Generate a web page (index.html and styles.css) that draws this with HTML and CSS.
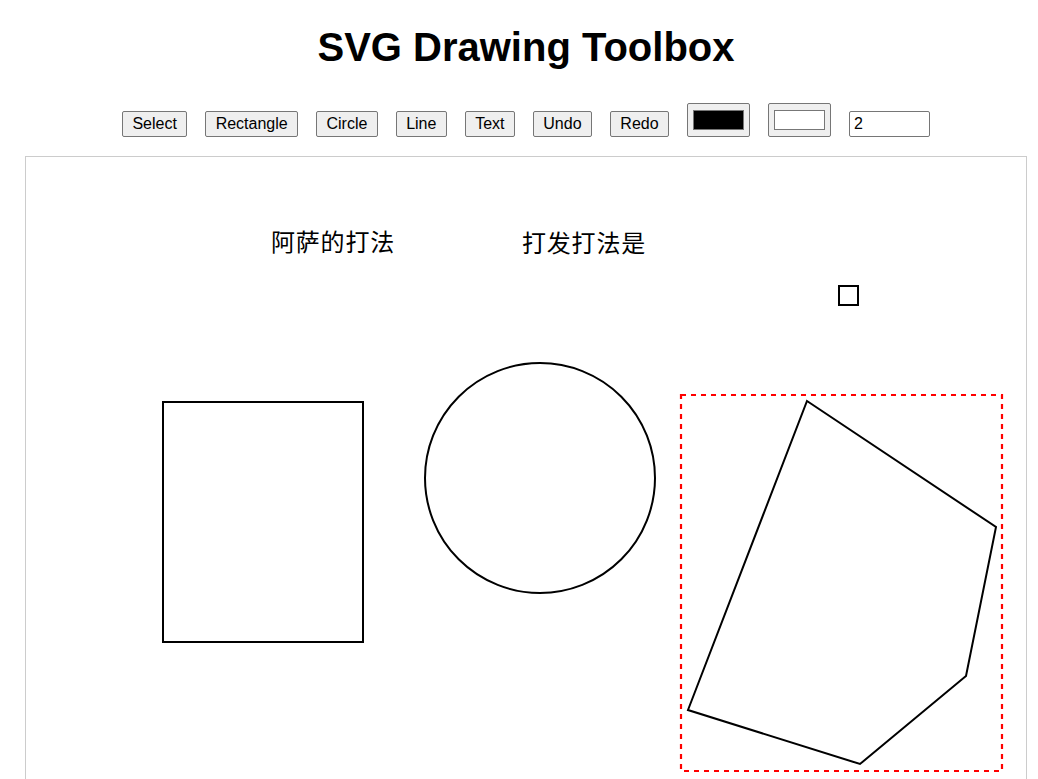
FILE: index.html
```html
<!DOCTYPE html>
<html lang="en">
<head>
    <meta charset="UTF-8">
    <meta name="viewport" content="width=device-width, initial-scale=1.0">
    <title>SVG Drawing Toolbox</title>
    <link rel="stylesheet" href="styles.css">
</head>
<body>
    <div class="app">
        <h1>SVG Drawing Toolbox</h1>

        <div class="toolbar">
            <button id="selectTool">Select</button>
            <button id="rectTool">Rectangle</button>
            <button id="circleTool">Circle</button>
            <button id="lineTool">Line</button>
            <button id="textTool">Text</button>
            <button id="undoBtn">Undo</button>
            <button id="redoBtn">Redo</button>
            <input type="color" id="strokeColor" value="#000000">
            <input type="color" id="fillColor" value="#ffffff">
            <input type="text" id="strokeWidth" value="2">
        </div>

        <svg id="canvas" class="canvas" width="1000" height="700" viewBox="0 0 1000 700">
            <text x="245" y="94" class="label">阿萨的打法</text>
            <text x="496" y="95" class="label">打发打法是</text>
            <rect x="813" y="129" width="19" height="19" fill="#fff" stroke="#000" stroke-width="2"></rect>
            <rect x="137" y="245" width="200" height="240" fill="#fff" stroke="#000" stroke-width="2"></rect>
            <circle cx="514" cy="321" r="115" fill="#fff" stroke="#000" stroke-width="2"></circle>
            <polygon points="781,244 970,370 940,519 834,607 662,553" fill="#fff" stroke="#000" stroke-width="2"></polygon>
            <!-- selection box -->
            <rect x="655" y="238" width="321" height="376" fill="none" stroke="red" stroke-width="2.2" stroke-dasharray="5,5"></rect>
        </svg>
    </div>
</body>
</html>
```

FILE: styles.css
```css
body {
    font-family: "Liberation Sans", Arial, sans-serif;
    margin: 0;
    background: #fff;
}
.app {
    width: 1002px;
    margin-left: 25px;
}
h1 {
    font-size: 40px;
    text-align: center;
    margin: 25px 0 33px;
}
.toolbar {
    display: flex;
    justify-content: center;
    align-items: flex-end;
    gap: 18px;
    margin-bottom: 19px;
}
button {
    font-family: "Liberation Sans", Arial, sans-serif;
    font-size: 16px;
    height: 26px;
    box-sizing: border-box;
    padding: 0 9.4px;
    background-color: #efefef;
    color: #000;
    border: 1px solid #767676;
    border-radius: 2px;
    cursor: pointer;
}
button:hover {
    background-color: #e5e5e5;
}
input[type="color"] {
    width: 63px;
    height: 34px;
    padding: 6px 5px;
    box-sizing: border-box;
    background-color: #efefef;
    border: 1px solid #767676;
    border-radius: 2px;
    cursor: pointer;
}
input[type="color"]::-webkit-color-swatch-wrapper {
    padding: 0;
}
input[type="color"]::-webkit-color-swatch {
    border: 1px solid #777;
    border-radius: 0;
}
input[type="text"] {
    width: 81px;
    height: 26px;
    box-sizing: border-box;
    padding: 3px 4px;
    font-family: "Liberation Sans", Arial, sans-serif;
    font-size: 16px;
    border: 1px solid #767676;
    border-radius: 2px;
}
.canvas {
    display: block;
    border: 1px solid #ccc;
    background: #fff;
}
.label {
    font-family: "Noto Sans CJK SC", "Liberation Sans", sans-serif;
    font-size: 24px;
    letter-spacing: 0.8px;
    fill: #000;
}
```
